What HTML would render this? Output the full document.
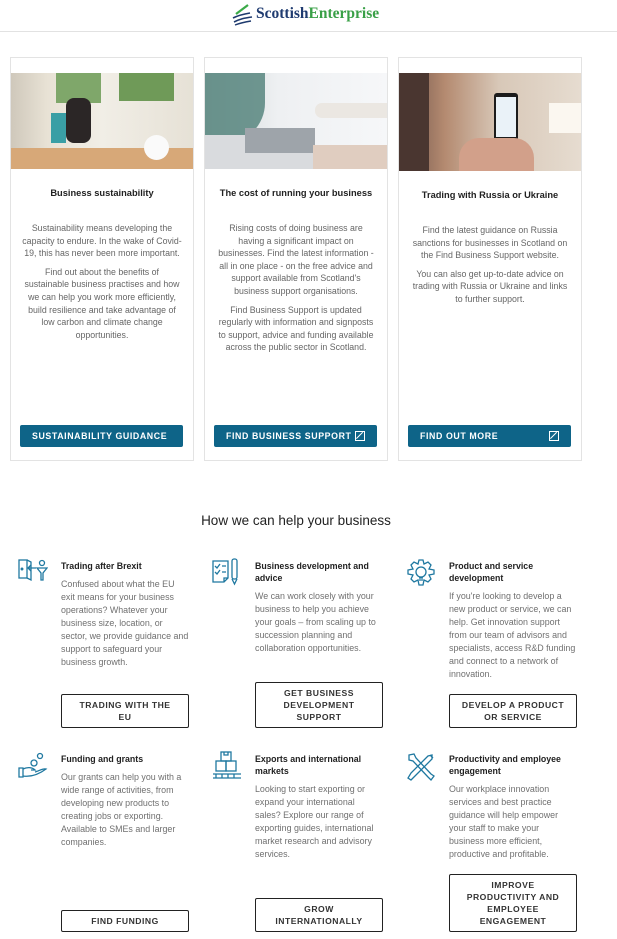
<!DOCTYPE html>
<html><head><meta charset="utf-8">
<style>
*{margin:0;padding:0;box-sizing:border-box}
body{width:617px;height:939px;background:#fff;font-family:"Liberation Sans",sans-serif;position:relative;overflow:hidden;color:#333}
.abs{position:absolute}
.hdr{left:0;top:0;width:617px;height:32px;border-bottom:1px solid #e2e2e2}
.card{border:1px solid #e3e3e3;top:57px;width:184px;height:404px;background:#fff}
.img{position:absolute;left:0;top:15px;width:182px;height:96px;overflow:hidden}
.ct{position:absolute;left:0;width:182px;text-align:center;font-weight:bold;font-size:9.3px;color:#222}
.cp{position:absolute;left:0;width:182px;text-align:center;font-size:8.8px;line-height:12.6px;color:#666}
.cp p{margin-bottom:6px}
.btn{position:absolute;left:9px;top:367px;width:163px;height:22px;background:#0e6488;border-radius:2px;color:#fff;font-weight:900;font-size:8.8px;letter-spacing:.6px;line-height:22px;padding-left:12px;white-space:nowrap}
.ext{position:absolute;right:12px;top:6px;width:10px;height:10px;border:1.2px solid #fff}
.ext:after{content:"";position:absolute;left:3px;top:-1px;width:1.2px;height:9px;background:#fff;transform:rotate(45deg)}
h2{position:absolute;top:513px;left:0;width:592px;text-align:center;font-size:13.5px;font-weight:normal;color:#222}
.t{position:absolute;font-weight:bold;font-size:8.8px;line-height:12px;color:#222}
.p{position:absolute;font-size:8.9px;line-height:13px;color:#707070;white-space:nowrap}
.ob{position:absolute;width:128px;border:1px solid #222;border-radius:2px;text-align:center;font-weight:900;font-size:8.6px;letter-spacing:.5px;line-height:12px;color:#333;display:flex;align-items:center;justify-content:center}
svg.ic{position:absolute;stroke:#1f78a0;fill:none;stroke-width:1.3}
</style></head><body>
<div class="abs hdr"></div>
<svg class="abs" style="left:230px;top:3px" width="24" height="24" viewBox="0 0 24 24"><path d="M4 19 C10 16 14 15 22 14" stroke="#1e3a6e" stroke-width="1.6" fill="none"/><path d="M3 15 C9 12 14 11 20 10" stroke="#1e3a6e" stroke-width="1.6" fill="none"/><path d="M6 11 C10 8 14 5 18 2" stroke="#3aaa48" stroke-width="2.2" fill="none"/><path d="M5 22 C10 20 15 19 21 18" stroke="#1e3a6e" stroke-width="1.4" fill="none"/></svg>
<div class="abs" style="left:256px;top:5px;font-family:'Liberation Serif',serif;font-weight:bold;font-size:15.5px"><span style="color:#1f3b70">Scottish</span><span style="color:#3aa047">Enterprise</span></div>

<div class="abs card" style="left:10px">
 <div class="img" style="background:linear-gradient(90deg,#cfc8bb 0,#e8e2d5 20%,#f1eee6 50%,#e6e1d6 100%)">
  <div class="abs" style="left:45px;top:0;width:45px;height:30px;background:#7fa76a"></div>
  <div class="abs" style="left:108px;top:0;width:55px;height:28px;background:#6f9a58"></div>
  <div class="abs" style="left:0;top:75px;width:182px;height:21px;background:#d7a878"></div>
  <div class="abs" style="left:55px;top:25px;width:25px;height:45px;background:#2b2626;border-radius:8px"></div>
  <div class="abs" style="left:40px;top:40px;width:15px;height:30px;background:#3a9fa5"></div>
  <div class="abs" style="left:133px;top:62px;width:25px;height:25px;background:#fafafa;border-radius:50%"></div>
 </div>
 <div class="ct" style="top:130px">Business sustainability</div>
 <div class="cp" style="top:164px"><p>Sustainability means developing the<br>capacity to endure. In the wake of Covid-<br>19, this has never been more important.</p><p>Find out about the benefits of<br>sustainable business practises and how<br>we can help you work more efficiently,<br>build resilience and take advantage of<br>low carbon and climate change<br>opportunities.</p></div>
 <div class="btn">SUSTAINABILITY GUIDANCE</div>
</div>

<div class="abs card" style="left:204px">
 <div class="img" style="background:linear-gradient(90deg,#cdd6d6 0,#eef0f2 40%,#f6f7f9 100%)">
  <div class="abs" style="left:0;top:0;width:60px;height:70px;background:#4f7f78;opacity:.8;border-radius:0 0 40px 0"></div>
  <div class="abs" style="left:0;top:62px;width:110px;height:34px;background:#d9dbde"></div>
  <div class="abs" style="left:40px;top:55px;width:70px;height:25px;background:#9ea4aa"></div>
  <div class="abs" style="left:110px;top:30px;width:72px;height:15px;background:#ebe7e2;border-radius:7px 0 0 7px"></div>
  <div class="abs" style="left:108px;top:72px;width:74px;height:24px;background:#e0cdc0"></div>
 </div>
 <div class="ct" style="top:130px">The cost of running your business</div>
 <div class="cp" style="top:164px"><p>Rising costs of doing business are<br>having a significant impact on<br>businesses. Find the latest information -<br>all in one place - on the free advice and<br>support available from Scotland's<br>business support organisations.</p><p>Find Business Support is updated<br>regularly with information and signposts<br>to support, advice and funding available<br>across the public sector in Scotland.</p></div>
 <div class="btn">FIND BUSINESS SUPPORT<span class="ext"></span></div>
</div>

<div class="abs card" style="left:398px">
 <div class="img" style="height:98px;background:linear-gradient(90deg,#6a5048 0,#b48a70 25%,#d8c8b8 55%,#e6dcd0 100%)">
  <div class="abs" style="left:0;top:0;width:30px;height:98px;background:#4a3630"></div>
  <div class="abs" style="left:95px;top:20px;width:24px;height:48px;background:#1c1c1c;border-radius:3px"></div>
  <div class="abs" style="left:97px;top:24px;width:20px;height:40px;background:#eaf2f8"></div>
  <div class="abs" style="left:60px;top:65px;width:75px;height:33px;background:#d2a08a;border-radius:20px 20px 0 0"></div>
  <div class="abs" style="left:150px;top:30px;width:32px;height:30px;background:#fbf7f0"></div>
 </div>
 <div class="ct" style="top:132px">Trading with Russia or Ukraine</div>
 <div class="cp" style="top:166px"><p>Find the latest guidance on Russia<br>sanctions for businesses in Scotland on<br>the Find Business Support website.</p><p>You can also get up-to-date advice on<br>trading with Russia or Ukraine and links<br>to further support.</p></div>
 <div class="btn">FIND OUT MORE<span class="ext"></span></div>
</div>

<h2>How we can help your business</h2>

<svg class="ic" style="left:18px;top:558px" width="30" height="26" viewBox="0 0 30 26"><rect x="1" y="2" width="8" height="18"/><path d="M9 2 L13 4 V22 L9 20"/><circle cx="4" cy="11" r=".8"/><path d="M18 10 H10 M13 7 L10 10 L13 13"/><circle cx="24" cy="5" r="2.5"/><path d="M19 10 H29 L25 15 V22 H23 V15 Z"/></svg>
<svg class="ic" style="left:212px;top:558px" width="30" height="28" viewBox="0 0 30 28"><path d="M1 3 H16 V20 L12 24 H1 Z M12 24 V20 H16"/><path d="M3 8 L5 10 L8 6 M10 8 H14 M3 14 L5 16 L8 12 M10 14 H14"/><rect x="20" y="1" width="5" height="20" rx="2"/><path d="M20 21 L22.5 26 L25 21"/></svg>
<svg class="ic" style="left:406px;top:558px" width="30" height="30" viewBox="0 0 30 30"><path d="M13 2 H17 L18 6 L22 4 L25 7 L23 11 L28 12 V16 L23 17 L25 21 L22 24 L18 22 L17 27 H13 L12 22 L8 24 L5 21 L7 17 L2 16 V12 L7 11 L5 7 L8 4 L12 6 Z"/><circle cx="15" cy="14" r="5"/><path d="M13 20 H17 M13 22 H17"/></svg>
<svg class="ic" style="left:18px;top:752px" width="30" height="26" viewBox="0 0 30 26"><circle cx="22" cy="4" r="2.5"/><circle cx="16" cy="11" r="3"/><path d="M1 16 H5 V25 H1 Z M5 17 C9 15 14 15 17 18 H13 M5 24 C12 25 20 23 28 17 C25 16 21 19 17 20"/></svg>
<svg class="ic" style="left:212px;top:750px" width="30" height="30" viewBox="0 0 30 30"><rect x="9" y="2" width="10" height="9"/><rect x="4" y="11" width="10" height="10"/><rect x="14" y="11" width="10" height="10"/><path d="M1 24 H29 M1 28 H29 M4 24 V28 M10 24 V28 M16 24 V28 M22 24 V28 M12 2 V5 H16 V2"/></svg>
<svg class="ic" style="left:406px;top:752px" width="30" height="30" viewBox="0 0 30 30"><path d="M3 3 L8 2 L10 6 L25 22 L28 24 L25 28 L22 25 L7 9 L3 8 Z"/><path d="M26 3 L22 4 L5 21 L2 26 L5 28 L9 24 L26 7 Z M24 3 L27 6"/></svg>

<div class="t" style="left:61px;top:560px">Trading after Brexit</div>
<div class="p" style="left:61px;top:578px">Confused about what the EU<br>exit means for your business<br>operations? Whatever your<br>business size, location, or<br>sector, we provide guidance and<br>support to safeguard your<br>business growth.</div>
<div class="ob" style="left:61px;top:694px;height:34px">TRADING WITH THE<br>EU</div>

<div class="t" style="left:255px;top:560px">Business development and<br>advice</div>
<div class="p" style="left:255px;top:590px">We can work closely with your<br>business to help you achieve<br>your goals – from scaling up to<br>succession planning and<br>collaboration opportunities.</div>
<div class="ob" style="left:255px;top:682px;height:46px">GET BUSINESS<br>DEVELOPMENT<br>SUPPORT</div>

<div class="t" style="left:449px;top:560px">Product and service<br>development</div>
<div class="p" style="left:449px;top:590px">If you're looking to develop a<br>new product or service, we can<br>help. Get innovation support<br>from our team of advisors and<br>specialists, access R&amp;D funding<br>and connect to a network of<br>innovation.</div>
<div class="ob" style="left:449px;top:694px;height:34px">DEVELOP A PRODUCT<br>OR SERVICE</div>

<div class="t" style="left:61px;top:753px">Funding and grants</div>
<div class="p" style="left:61px;top:771px">Our grants can help you with a<br>wide range of activities, from<br>developing new products to<br>creating jobs or exporting.<br>Available to SMEs and larger<br>companies.</div>
<div class="ob" style="left:61px;top:910px;height:22px">FIND FUNDING</div>

<div class="t" style="left:255px;top:753px">Exports and international<br>markets</div>
<div class="p" style="left:255px;top:783px">Looking to start exporting or<br>expand your international<br>sales? Explore our range of<br>exporting guides, international<br>market research and advisory<br>services.</div>
<div class="ob" style="left:255px;top:898px;height:34px">GROW<br>INTERNATIONALLY</div>

<div class="t" style="left:449px;top:753px">Productivity and employee<br>engagement</div>
<div class="p" style="left:449px;top:783px">Our workplace innovation<br>services and best practice<br>guidance will help empower<br>your staff to make your<br>business more efficient,<br>productive and profitable.</div>
<div class="ob" style="left:449px;top:874px;height:58px">IMPROVE<br>PRODUCTIVITY AND<br>EMPLOYEE<br>ENGAGEMENT</div>
</body></html>
